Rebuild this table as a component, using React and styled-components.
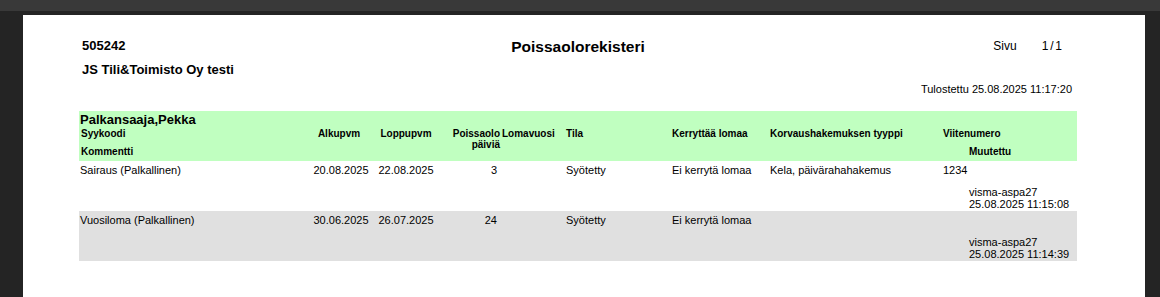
import React from 'react';
import styled, { createGlobalStyle } from 'styled-components';

const GlobalStyle = createGlobalStyle`
  html, body {
    margin: 0;
    padding: 0;
    background: #262626;
    font-family: "Liberation Sans", Arial, sans-serif;
    color: #000;
  }
`;

const Viewer = styled.div`
  width: 1160px;
  height: 297px;
  overflow: hidden;
  display: flex;
  flex-direction: column;
  background: #232323;
`;

const TopBar = styled.div`
  height: 11px;
  background: #393939;
  flex-shrink: 0;
`;

const Workspace = styled.div`
  flex: 1;
  display: flex;
  padding: 4px 15px 0 23px;
  background: #242424;
`;

const Sheet = styled.div`
  flex: 1;
  background: #fff;
  padding: 0 0 0 56px;
`;

const Report = styled.div`
  width: 998px;
`;

const HeadRow = styled.div`
  display: grid;
  grid-template-columns: 1fr auto 1fr;
  align-items: start;
  padding-top: 23px;
`;

const CompanyBlock = styled.div`
  padding-left: 3px;
  font-weight: bold;
  font-size: 13px;
  line-height: 15px;
  display: flex;
  flex-direction: column;
  gap: 9px;
`;

const Title = styled.h1`
  margin: 0;
  font-size: 15.5px;
  line-height: 18px;
  font-weight: bold;
`;

const PageInfo = styled.div`
  display: flex;
  justify-content: flex-end;
  gap: 25px;
  font-size: 12px;
  line-height: 15px;
  padding: 1px 15px 0 0;
`;

const PageNo = styled.span`
  word-spacing: -1.5px;
`;

const Printed = styled.div`
  text-align: right;
  font-size: 11px;
  line-height: 13px;
  padding: 29px 5px 0 0;
`;

const Grid = styled.div`
  display: grid;
  grid-template-columns: 231px 62px 68px 61px 59px 108px 98px 174px 137px;
  grid-template-rows: ${p => p.$rows || 'auto'};
  background: ${p => p.$bg || '#fff'};
  height: ${p => p.$h || 'auto'};
  margin-top: ${p => p.$mt || '0'};
`;

const Group = styled.div`
  grid-column: 1 / -1;
  font-weight: bold;
  font-size: 13px;
  line-height: 15px;
  padding: 1px 0 0 1px;
`;

const HeadCell = styled.div`
  grid-column: ${p => p.$col};
  grid-row: ${p => p.$row || '2'};
  font-weight: bold;
  font-size: 10px;
  line-height: 11px;
  text-align: ${p => p.$align || 'left'};
  padding-left: ${p => p.$pl || 0}px;
  padding-right: ${p => p.$pr || 0}px;
  padding-top: ${p => p.$pt ?? 1}px;
  white-space: nowrap;
`;

const Cell = styled.div`
  grid-column: ${p => p.$col};
  grid-row: 1;
  font-size: 11px;
  line-height: 13px;
  text-align: ${p => p.$align || 'left'};
  padding-left: ${p => p.$pl || 0}px;
  padding-right: ${p => p.$pr || 0}px;
  padding-top: 3px;
  white-space: nowrap;
`;

const Changed = styled.div`
  grid-column: 9;
  grid-row: 1;
  align-self: end;
  font-size: 11px;
  line-height: 11.5px;
  padding: 0 0 1px 29px;
  white-space: nowrap;
`;

const rows = [
  {
    reason: 'Sairaus (Palkallinen)',
    start: '20.08.2025',
    end: '22.08.2025',
    days: '3',
    state: 'Syötetty',
    accrue: 'Ei kerrytä lomaa',
    claim: 'Kela, päivärahahakemus',
    ref: '1234',
    by: 'visma-aspa27',
    at: '25.08.2025 11:15:08',
    bg: '#fff',
  },
  {
    reason: 'Vuosiloma (Palkallinen)',
    start: '30.06.2025',
    end: '26.07.2025',
    days: '24',
    state: 'Syötetty',
    accrue: 'Ei kerrytä lomaa',
    claim: '',
    ref: '',
    by: 'visma-aspa27',
    at: '25.08.2025 11:14:39',
    bg: '#e0e0e0',
  },
];

export default function App() {
  return (
    <>
      <GlobalStyle />
      <Viewer>
        <TopBar />
        <Workspace>
          <Sheet>
            <Report>
              <HeadRow>
                <CompanyBlock>
                  <span>505242</span>
                  <span>JS Tili&amp;Toimisto Oy testi</span>
                </CompanyBlock>
                <Title>Poissaolorekisteri</Title>
                <div>
                  <PageInfo>
                    <span>Sivu</span>
                    <PageNo>1 / 1</PageNo>
                  </PageInfo>
                  <Printed>Tulostettu 25.08.2025 11:17:20</Printed>
                </div>
              </HeadRow>

              <Grid $bg="#c0ffc0" $h="50px" $mt="15px" $rows="16px 12px auto">
                <Group>Palkansaaja,Pekka</Group>
                <HeadCell $col={1} $pl={2}>Syykoodi</HeadCell>
                <HeadCell $col={2} $align="center" $pr={4}>Alkupvm</HeadCell>
                <HeadCell $col={3} $align="center">Loppupvm</HeadCell>
                <HeadCell $col={4} $row="2 / span 2" $align="right" $pr={1}>
                  Poissaolo
                  <br />
                  päiviä
                </HeadCell>
                <HeadCell $col={5} $pl={1}>Lomavuosi</HeadCell>
                <HeadCell $col={6} $pl={6}>Tila</HeadCell>
                <HeadCell $col={7} $pl={4}>Kerryttää lomaa</HeadCell>
                <HeadCell $col={8} $pl={4}>Korvaushakemuksen tyyppi</HeadCell>
                <HeadCell $col={9} $pl={3}>Viitenumero</HeadCell>
                <HeadCell $col={1} $row={3} $pl={2} $pt={7}>Kommentti</HeadCell>
                <HeadCell $col={9} $row={3} $pl={29} $pt={7}>Muutettu</HeadCell>
              </Grid>

              {rows.map(r => (
                <Grid key={r.at} $bg={r.bg} $h="50px">
                  <Cell $col={1} $pl={1}>{r.reason}</Cell>
                  <Cell $col={2} $align="center">{r.start}</Cell>
                  <Cell $col={3} $align="center">{r.end}</Cell>
                  <Cell $col={4} $align="right" $pr={4}>{r.days}</Cell>
                  <Cell $col={6} $pl={6}>{r.state}</Cell>
                  <Cell $col={7} $pl={4}>{r.accrue}</Cell>
                  <Cell $col={8} $pl={4}>{r.claim}</Cell>
                  <Cell $col={9} $pl={3}>{r.ref}</Cell>
                  <Changed>
                    {r.by}
                    <br />
                    {r.at}
                  </Changed>
                </Grid>
              ))}
            </Report>
          </Sheet>
        </Workspace>
      </Viewer>
    </>
  );
}
